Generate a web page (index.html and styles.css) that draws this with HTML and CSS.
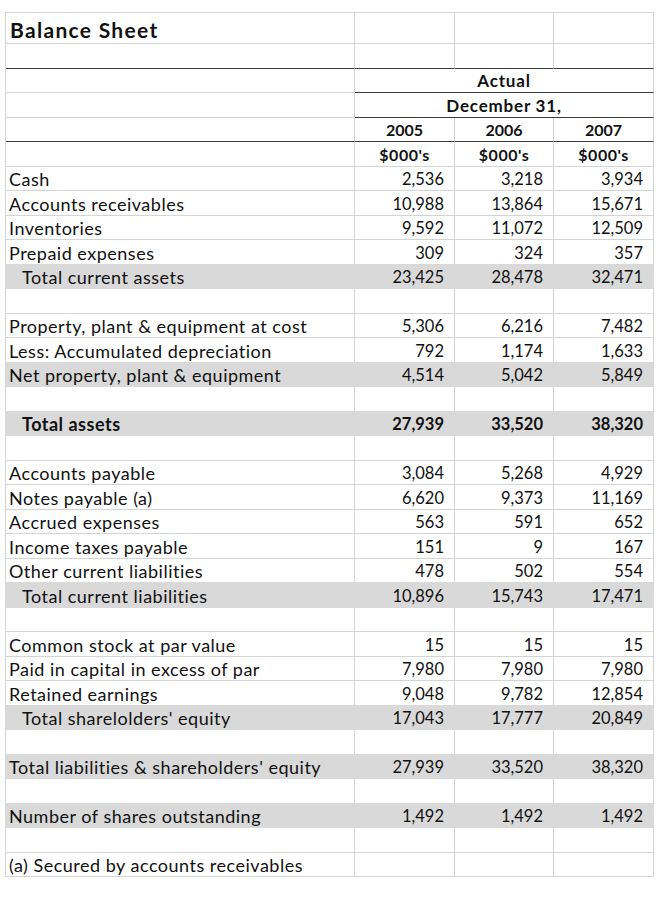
FILE: index.html
```html
<!DOCTYPE html>
<html>
<head>
<meta charset="utf-8">
<title>Balance Sheet</title>
<link rel="stylesheet" href="styles.css">
</head>
<body>
<div class="sheet">
  <div class="c lbl title">Balance Sheet</div><div class="c"></div><div class="c"></div><div class="c"></div>

  <div class="c dk"></div><div class="c dk"></div><div class="c dk"></div><div class="c dk"></div>

  <div class="c"></div><div class="c hd wide span3 dk">Actual</div>
  <div class="c"></div><div class="c hd wide span3 dk">December 31,</div>
  <div class="c dk"></div><div class="c hd dk">2005</div><div class="c hd dk">2006</div><div class="c hd dk">2007</div>
  <div class="c"></div><div class="c hd unit">$000's</div><div class="c hd unit">$000's</div><div class="c hd unit">$000's</div>

  <div class="c lbl">Cash</div><div class="c num">2,536</div><div class="c num">3,218</div><div class="c num">3,934</div>
  <div class="c lbl">Accounts receivables</div><div class="c num">10,988</div><div class="c num">13,864</div><div class="c num">15,671</div>
  <div class="c lbl">Inventories</div><div class="c num">9,592</div><div class="c num">11,072</div><div class="c num">12,509</div>
  <div class="c lbl">Prepaid expenses</div><div class="c num">309</div><div class="c num">324</div><div class="c num">357</div>
  <div class="c lbl ind gray first">Total current assets</div><div class="c num gray">23,425</div><div class="c num gray">28,478</div><div class="c num gray">32,471</div>
  <div class="c"></div><div class="c"></div><div class="c"></div><div class="c"></div>

  <div class="c lbl">Property, plant &amp; equipment at cost</div><div class="c num">5,306</div><div class="c num">6,216</div><div class="c num">7,482</div>
  <div class="c lbl">Less: Accumulated depreciation</div><div class="c num">792</div><div class="c num">1,174</div><div class="c num">1,633</div>
  <div class="c lbl gray first">Net property, plant &amp; equipment</div><div class="c num gray">4,514</div><div class="c num gray">5,042</div><div class="c num gray">5,849</div>
  <div class="c"></div><div class="c"></div><div class="c"></div><div class="c"></div>

  <div class="c lbl ind b gray first">Total assets</div><div class="c num b gray">27,939</div><div class="c num b gray">33,520</div><div class="c num b gray">38,320</div>
  <div class="c"></div><div class="c"></div><div class="c"></div><div class="c"></div>

  <div class="c lbl">Accounts payable</div><div class="c num">3,084</div><div class="c num">5,268</div><div class="c num">4,929</div>
  <div class="c lbl">Notes payable (a)</div><div class="c num">6,620</div><div class="c num">9,373</div><div class="c num">11,169</div>
  <div class="c lbl">Accrued expenses</div><div class="c num">563</div><div class="c num">591</div><div class="c num">652</div>
  <div class="c lbl">Income taxes payable</div><div class="c num">151</div><div class="c num">9</div><div class="c num">167</div>
  <div class="c lbl">Other current liabilities</div><div class="c num">478</div><div class="c num">502</div><div class="c num">554</div>
  <div class="c lbl ind gray first">Total current liabilities</div><div class="c num gray">10,896</div><div class="c num gray">15,743</div><div class="c num gray">17,471</div>
  <div class="c"></div><div class="c"></div><div class="c"></div><div class="c"></div>

  <div class="c lbl">Common stock at par value</div><div class="c num">15</div><div class="c num">15</div><div class="c num">15</div>
  <div class="c lbl">Paid in capital in excess of par</div><div class="c num">7,980</div><div class="c num">7,980</div><div class="c num">7,980</div>
  <div class="c lbl">Retained earnings</div><div class="c num">9,048</div><div class="c num">9,782</div><div class="c num">12,854</div>
  <div class="c lbl ind gray first">Total sharelolders' equity</div><div class="c num gray">17,043</div><div class="c num gray">17,777</div><div class="c num gray">20,849</div>
  <div class="c"></div><div class="c"></div><div class="c"></div><div class="c"></div>

  <div class="c lbl gray first">Total liabilities &amp; shareholders' equity</div><div class="c num gray">27,939</div><div class="c num gray">33,520</div><div class="c num gray">38,320</div>
  <div class="c"></div><div class="c"></div><div class="c"></div><div class="c"></div>

  <div class="c lbl gray first">Number of shares outstanding</div><div class="c num gray">1,492</div><div class="c num gray">1,492</div><div class="c num gray">1,492</div>
  <div class="c"></div><div class="c"></div><div class="c"></div><div class="c"></div>

  <div class="c lbl">(a) Secured by accounts receivables</div><div class="c"></div><div class="c"></div><div class="c"></div>
</div>
</body>
</html>
```

FILE: styles.css
```css
html, body {
  margin: 0;
  padding: 0;
  background: #ffffff;
}

body {
  font-family: Lato, "Open Sans", "Liberation Sans", sans-serif;
  color: #111111;
}

.sheet {
  margin: 12px 0 0 5px;
  width: 648px;
  display: grid;
  grid-template-columns: 349px 100px 99px 100px;
  grid-template-rows: 31px;
  grid-auto-rows: 24.5px;
  border-left: 1px solid #d4d4d4;
  border-top: 1px solid #d4d4d4;
}

.c {
  box-sizing: border-box;
  border-right: 1px solid #d4d4d4;
  border-bottom: 1px solid #d4d4d4;
  font-size: 17px;
  line-height: 20px;
  white-space: nowrap;
  display: flex;
  align-items: flex-end;
  padding-bottom: 1px;
  overflow: visible;
}

.lbl {
  padding-left: 3px;
  font-size: 18px;
  letter-spacing: 0.5px;
}

.title {
  font-size: 21px;
  font-weight: 700;
  letter-spacing: 1.3px;
  padding-left: 4px;
  padding-bottom: 3px;
}

.ind {
  padding-left: 16px;
}

.num {
  justify-content: flex-end;
  padding-right: 10px;
  font-size: 16.5px;
}

.hd {
  justify-content: center;
  font-weight: 700;
  font-size: 16px;
}

.hd.wide {
  font-size: 17px;
  letter-spacing: 0.8px;
}

.hd.unit {
  letter-spacing: 0.5px;
}

.span3 {
  grid-column: span 3;
}

.b {
  font-weight: 700;
}

.dk {
  border-bottom-color: #3c3c3c;
}

.gray {
  background: #d9d9d9;
  border-color: #d9d9d9;
  box-shadow: 0 -1px 0 #d9d9d9;
}

.gray.first {
  box-shadow: -1px -1px 0 #d9d9d9, 0 -1px 0 #d9d9d9;
}
```
